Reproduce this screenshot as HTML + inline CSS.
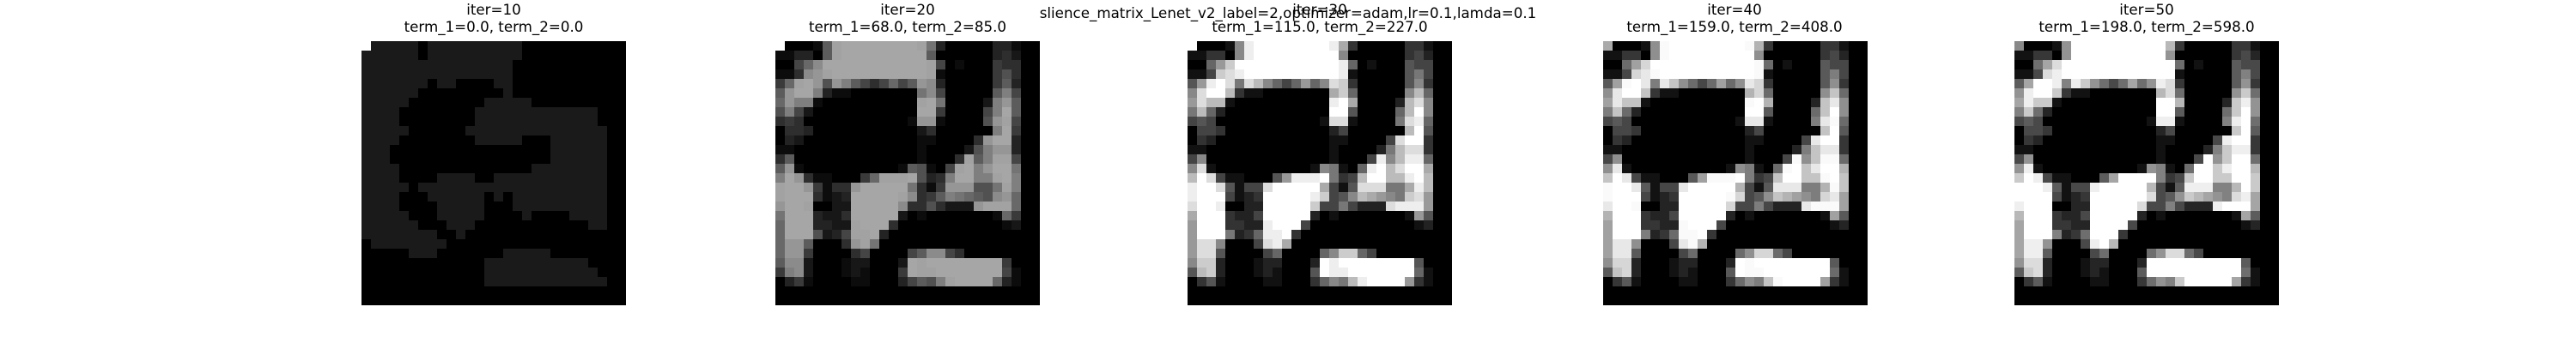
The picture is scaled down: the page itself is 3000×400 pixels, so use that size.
<!DOCTYPE html>
<html><head><meta charset="utf-8">
<style>
html,body{margin:0;padding:0;background:#fff;}
body{width:3000px;height:400px;position:relative;overflow:hidden;font-family:"DejaVu Sans","Liberation Sans",sans-serif;color:#000;}
.t{position:absolute;width:480px;text-align:center;font-size:16.7px;line-height:19.5px;white-space:nowrap;}
.p{position:absolute;top:48px;width:308px;height:308px;}
.sup{position:absolute;left:0;width:3000px;top:5px;text-align:center;font-size:16.7px;line-height:20px;}
</style></head><body>
<div class="sup">slience_matrix_Lenet_v2_label=2,optimizer=adam,lr=0.1,lamda=0.1</div>
<div class="t" style="left:335px;top:2px">iter=10<br>term_1=0.0, term_2=0.0</div>
<div class="t" style="left:817px;top:2px">iter=20<br>term_1=68.0, term_2=85.0</div>
<div class="t" style="left:1297px;top:2px">iter=30<br>term_1=115.0, term_2=227.0</div>
<div class="t" style="left:1780px;top:2px">iter=40<br>term_1=159.0, term_2=408.0</div>
<div class="t" style="left:2260px;top:2px">iter=50<br>term_1=198.0, term_2=598.0</div>
<svg class="p" id="p1" style="left:421px" viewBox="0 0 308 308" shape-rendering="crispEdges"></svg>
<svg class="p" id="p2" style="left:903px" viewBox="0 0 308 308" shape-rendering="crispEdges"></svg>
<svg class="p" id="p3" style="left:1383px" viewBox="0 0 308 308" shape-rendering="crispEdges"></svg>
<svg class="p" id="p4" style="left:1867px" viewBox="0 0 308 308" shape-rendering="crispEdges"></svg>
<svg class="p" id="p5" style="left:2346px" viewBox="0 0 308 308" shape-rendering="crispEdges"></svg>
<script>
function z(n){var s="";for(var i=0;i<n;i++)s+="0";return s;}
function fx(s){while(s.length<28)s+="0";return s.slice(0,28);}
var A=["f1#5.1#10","#6.1#10","#16","#16","#7.1#2.4#2","#6.9#1","#5.8#5","#4.8#13","#4.8#13","#5.6#15","#4.8#5.3#6","#3.17#6","#3.17#6","#4.14#8","#4.4#4.2#12","#5.1#20","#4.3#6.1#1.1#10","#4.4#5.3#10","#5.3#5.4#1.4#4","#6.3#3.12#2","#8.2#1",".1#8",".5#3.7#5",".13#11",".13#12",".13#13","",""];
var B=[
"f00018e"+"ffffffff"+"ea3"+z(5)+"331",
"113308e"+"fffffffff"+"8"+z(6)+"342",
"0069c"+"fffffffffff"+"e6010005440",
"114cde"+"ffffffffff"+"e1"+z(5)+"574",
"59efd7db8646968dc3"+z(5)+"583",
"8dffb311"+z(7)+"ac6"+z(5)+"8b6",
"9dbb1"+z(10)+"efa"+z(4)+"2bd8",
"7b62"+z(11)+"ff5"+z(4)+"6bf8",
"454"+z(11)+"1dd1"+z(4)+"7de6",
"0443"+z(11)+"24"+z(6)+"bf5",
"032"+z(12)+"11"+z(4)+"4dff3",
"11"+z(13)+"1"+z(4)+"27bdd3",
"48"+z(13)+"1"+z(3)+"4e8bee6",
"8d1"+z(10)+"1871"+"0"+"6efbdffa",
"bfd411000"+"59eeef734bffbbefb",
"effd5144dfffffa415ddd77aeb",
"efff4123fffffec458ba987cd9",
"dffe0022fffffc4474222deee9",
"afff3224fffff201"+z(7)+"195",
"9fff3322efff4"+z(11)+"12",
"9fff7236eef3",
"9dd80004dea",
"9dd5000046000068cc64",
"8cc2000122000"+"2fe"+"ffffffff"+"5",
"5bc2000121000"+"5fee"+"fffffff"+"61",
"0351000011000"+"3687be"+"ffff"+"931",
"",""].map(fx);
function hex(v){v=Math.max(0,Math.min(255,Math.round(v)));var h=v.toString(16);return h.length<2?"0"+h:h;}
function draw(id,f){var s="";for(var r=0;r<28;r++)for(var c=0;c<28;c++){var v=f(r,c);if(v>0){var g=hex(v);s+='<rect x="'+c*11+'" y="'+r*11+'" width="11" height="11" fill="#'+g+g+g+'"/>';}}
document.getElementById(id).innerHTML='<rect width="308" height="308" fill="#000"/>'+s;}
var G1=A.map(function(x){var o="";x.replace(/(\D)(\d+)/g,function(m,ch,n){for(var i=0;i<+n;i++)o+=ch;});while(o.length<28)o+=".";return o.slice(0,28);});
draw("p1",function(r,c){var ch=G1[r][c];return ch=="f"?255:ch=="#"?26:0;});
function b(r,c){var ch=B[r][c];return parseInt(ch,16)*17;}
draw("p3",b);
draw("p2",function(r,c){if(r==0&&c==0)return 255;var v=b(r,c);return Math.min(166,v*0.68);});
draw("p4",function(r,c){if(r==0&&c==0)return 170;return Math.min(255,b(r,c)*1.05);});
draw("p5",function(r,c){if(r==0&&c==0)return 136;return Math.min(255,b(r,c)*1.08);});
</script>
</body></html>
